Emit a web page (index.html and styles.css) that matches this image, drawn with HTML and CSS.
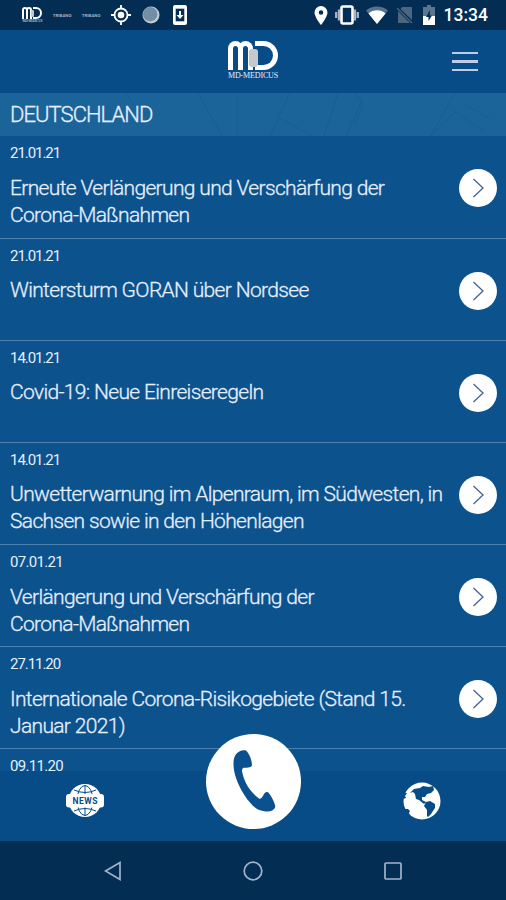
FILE: index.html
```html
<!DOCTYPE html>
<html lang="de">
<head>
  <meta charset="UTF-8">
  <meta name="viewport" content="width=device-width, initial-scale=1.0">
  <title>MD Medicus - Deutschland</title>
  <link rel="stylesheet" href="styles.css">
</head>
<body>
  <div class="phone">
    <div class="statusbar">
      <div class="status-left">
        <div class="logo logo-small">
          <div class="mark"><i class="arch"></i><i class="arch"></i><i class="bow"></i><i class="figure"></i></div>
          <span class="logo-name">MD-MEDICUS</span>
        </div>
        <span class="tiny">TRIBANO</span>
        <span class="tiny">TRIBANO</span>
        <svg class="ico-gps" width="20" height="20" viewBox="0 0 20 20">
          <circle cx="10" cy="10" r="6.5" fill="none" stroke="#fff" stroke-width="1.8"/>
          <circle cx="10" cy="10" r="3.3" fill="#fff"/>
          <path d="M10 0v3M10 17v3M0 10h3M17 10h3" stroke="#fff" stroke-width="1.8"/>
        </svg>
        <svg class="ico-ball" width="18" height="18" viewBox="0 0 18 18">
          <circle cx="9" cy="9" r="8.5" fill="#c3ccd4"/>
          <circle cx="8.2" cy="8.2" r="7.2" fill="#738fa6"/>
        </svg>
        <svg class="ico-down" width="14" height="20" viewBox="0 0 14 20">
          <rect width="14" height="20" rx="2" fill="#fff"/>
          <rect x="2.7" y="3.7" width="8.6" height="12.6" fill="#032d53"/>
          <path d="M6 6h2v4h2.5L7 14 3.5 10H6z" fill="#fff"/>
        </svg>
      </div>
      <div class="status-right">
        <svg width="14" height="19" viewBox="0 0 14 19">
          <path fill-rule="evenodd" d="M7 0a6.5 6.5 0 0 0-6.5 6.5C.5 11 7 19 7 19s6.5-8 6.5-12.5A6.5 6.5 0 0 0 7 0zm0 4.2a2.3 2.3 0 1 1 0 4.6 2.3 2.3 0 0 1 0-4.6z" fill="#fff"/>
        </svg>
        <svg class="ico-vibrate" width="24" height="20" viewBox="0 0 24 20">
          <path d="M1.2 7v6M4 4.5v11M20 4.5v11M22.8 7v6" stroke="#a9b4c0" stroke-width="2.3"/>
          <rect x="6.5" y="1.5" width="11" height="17" rx="1.5" fill="none" stroke="#fff" stroke-width="2.6"/>
        </svg>
        <svg class="ico-wifi" width="22" height="18" viewBox="0 0 22 18">
          <path d="M0 4.500a17 17 0 0 1 22 0L11 18z" fill="#57728a"/>
          <path d="M2.500 7.500a13 13 0 0 1 17 0L11 18z" fill="#fff"/>
        </svg>
        <svg class="ico-sim" width="18" height="18" viewBox="0 0 18 18">
          <path d="M6 1h10v13L4.500 3zM2 5l12 12H2z" fill="#4c667f"/>
          <path d="M1 2l15 15" stroke="#4c667f" stroke-width="1.3"/>
        </svg>
        <svg class="ico-battery" width="12" height="20" viewBox="0 0 12 20">
          <path d="M4 0h4v2h4v9H0V2h4z" fill="#5b758e"/>
          <path d="M0 11h12v9H0z" fill="#fff"/>
          <path d="M7 5L3 12h2.500v4L9 10.500H6.800z" fill="#032d53"/>
        </svg>
        <span class="clock">13:34</span>
      </div>
    </div>

    <header class="header">
      <div class="logo">
        <div class="mark"><i class="arch"></i><i class="arch"></i><i class="bow"></i><i class="figure"></i></div>
        <span class="logo-name">MD-MEDICUS</span>
      </div>
      <div class="burger"><i></i><i></i><i></i></div>
    </header>

    <div class="country">
      <svg class="country-bg" width="506" height="43" viewBox="0 0 506 43" fill="none" stroke="#144f83" stroke-opacity=".35">
        <path d="M125 0l14 18 14 3M198 0l24 43M237 5v38M290 0l-20 43M280 25l32 18M338 0l-14 43M355 0l8 10-8 22M346 43l16-36M455 0l-24 43M430 43l25-24 30 20M465 12l26 14" />
      </svg>
      <h1>DEUTSCHLAND</h1>
    </div>

    <main class="news">
      <article class="item">
        <div class="text"><time>21.01.21</time><h2>Erneute Verlängerung und Verschärfung der<br>Corona-Maßnahmen</h2></div>
        <span class="go"><svg width="38" height="38" viewBox="0 0 38 38"><path d="M14.5 10l9.500 9-9.500 9"/></svg></span>
      </article>
      <article class="item">
        <div class="text"><time>21.01.21</time><h2>Wintersturm GORAN über Nordsee</h2></div>
        <span class="go"><svg width="38" height="38" viewBox="0 0 38 38"><path d="M14.5 10l9.500 9-9.500 9"/></svg></span>
      </article>
      <article class="item">
        <div class="text"><time>14.01.21</time><h2>Covid-19: Neue Einreiseregeln</h2></div>
        <span class="go"><svg width="38" height="38" viewBox="0 0 38 38"><path d="M14.5 10l9.500 9-9.500 9"/></svg></span>
      </article>
      <article class="item">
        <div class="text"><time>14.01.21</time><h2>Unwetterwarnung im Alpenraum, im Südwesten, in<br>Sachsen sowie in den Höhenlagen</h2></div>
        <span class="go"><svg width="38" height="38" viewBox="0 0 38 38"><path d="M14.5 10l9.500 9-9.500 9"/></svg></span>
      </article>
      <article class="item">
        <div class="text"><time class="wide">07.01.21</time><h2>Verlängerung und Verschärfung der<br>Corona-Maßnahmen</h2></div>
        <span class="go"><svg width="38" height="38" viewBox="0 0 38 38"><path d="M14.5 10l9.500 9-9.500 9"/></svg></span>
      </article>
      <article class="item">
        <div class="text"><time>27.11.20</time><h2>Internationale Corona-Risikogebiete (Stand 15.<br>Januar 2021)</h2></div>
        <span class="go"><svg width="38" height="38" viewBox="0 0 38 38"><path d="M14.5 10l9.500 9-9.500 9"/></svg></span>
      </article>
      <article class="item last">
        <div class="text"><time class="wide">09.11.20</time></div>
      </article>
    </main>

    <footer class="tabs">
      <svg class="tab-news" width="38" height="36" viewBox="0 0 38 36">
        <circle cx="19" cy="17.5" r="16.5" fill="#fff"/>
        <g fill="none" stroke="#074b87" stroke-width="1">
          <ellipse cx="19" cy="17.5" rx="8" ry="15"/>
          <path d="M19 2v31M8 7q11 5 22 0M8 28q11-5 22 0"/>
        </g>
        <rect y="11" width="38" height="13.5" rx="3" fill="#fff"/>
        <text x="19" y="20.8" text-anchor="middle" textLength="25" class="news-word">NEWS</text>
      </svg>
      <svg class="tab-world" width="38" height="38" viewBox="0 0 38 38">
        <circle cx="19" cy="19" r="18.5" fill="#fff"/>
        <path fill="#074b87" d="M11 7l6-1 3-2 6 1 4-1 1 4-3 3-4 1-2 3-3 0 0 3 4 2-2 2-5-4-3-1-1-5-2-2-3 1zM23 20l4-1 5 3 0 4-4 6-3 3-1-1 0-6-3-4zM0 11l4 0-2 3 1 2-3 1zM0 24l2 3 3 0 2 2-1 2 2 5-8-5z"/>
      </svg>
      <div class="call">
        <svg width="95" height="95" viewBox="0 0 95 95">
          <path fill="#0b5190" d="M27.500 29C27.500 22 31 17.500 36 16.500c2.500-.5 4-.5 5 1C44 21 46 27 46 31.500c-1 2.500-6 2-9 2.500-1 1-1.200 2.500-.8 4C38 48 44 58 53 64.500c3 1.500 4.500-5 6.500-6s3 0 4 1.500c3 4 5.500 9.500 5.800 13C68 76.500 64 78 60 77.500c-4-.3-8-1.500-11-4C38 64 27 44 27.500 29z"/>
        </svg>
      </div>
    </footer>

    <nav class="android">
      <svg width="18" height="20" viewBox="0 0 18 20"><path d="M1.500 10L16 1.500v17z"/></svg>
      <svg width="20" height="20" viewBox="0 0 20 20"><circle cx="10" cy="10" r="8.800"/></svg>
      <svg width="18" height="18" viewBox="0 0 18 18"><rect x="1" y="1" width="16" height="16" rx="1"/></svg>
    </nav>
  </div>
</body>
</html>
```

FILE: styles.css
```css
* {
  box-sizing: border-box;
}

body {
  margin: 0;
  font-family: Roboto, "Liberation Sans", sans-serif;
  color: #e6effc;
}

svg {
  display: block;
  flex: none;
}

.phone {
  width: 506px;
  height: 900px;
  display: flex;
  flex-direction: column;
  overflow: hidden;
  background: #0c528d;
}

/* status bar */
.statusbar {
  height: 30px;
  flex: none;
  display: flex;
  align-items: center;
  justify-content: space-between;
  padding: 0 18px 0 22px;
  background: #032d53;
}

.status-left,
.status-right {
  display: flex;
  align-items: center;
}

.tiny {
  width: 19px;
  margin-left: 10px;
  font-size: 4.4px;
  font-weight: bold;
  color: #9fb3c6;
}

.ico-gps { margin-left: 10px; }
.ico-ball { margin-left: 11px; }
.ico-down { margin-left: 13px; }
.ico-vibrate { margin-left: 7px; }
.ico-wifi { margin-left: 7px; }
.ico-sim { margin-left: 8px; }
.ico-battery { margin-left: 9px; }

.clock {
  margin-left: 9px;
  font-size: 17.5px;
  font-weight: 500;
  line-height: 30px;
  color: #fff;
}

/* logo */
.logo {
  width: 52px;
  display: flex;
  flex-direction: column;
  align-items: center;
}

.mark {
  position: relative;
  display: flex;
}

.arch {
  width: 15px;
  height: 29px;
  border: 5px solid #fff;
  border-bottom: 0;
  border-radius: 8px 8px 0 0;
}

.arch + .arch {
  margin-left: -5px;
}

.bow {
  width: 23px;
  height: 29px;
  margin-left: 2px;
  border: 5px solid #fff;
  border-left: 0;
  border-radius: 0 15px 15px 0;
}

.figure {
  position: absolute;
  left: 21px;
  top: 8px;
  width: 9px;
  height: 18px;
  border-radius: 3px;
  background: #c5c8cc;
}

.logo-name {
  font: 8px/11px "Liberation Serif", serif;
  letter-spacing: -.15px;
  white-space: nowrap;
}

.logo-small {
  zoom: .4;
}

/* header */
.header {
  height: 63px;
  flex: none;
  display: grid;
  grid-template-columns: 1fr 52px 1fr;
  align-items: center;
  background: #074b87;
}

.header .logo {
  grid-column: 2;
  padding-bottom: 1px;
}

.burger {
  width: 26px;
  margin-right: 28px;
  justify-self: end;
  display: grid;
  gap: 6px;
}

.burger i {
  height: 2.5px;
  background: #bccbe8;
}

.country {
  position: relative;
  height: 43px;
  flex: none;
  padding-left: 10px;
  background: #1b6499;
}

.country-bg {
  position: absolute;
  left: 0;
  top: 0;
}

.country h1 {
  position: relative;
  margin: 0;
  font-size: 22px;
  font-weight: 300;
  line-height: 43px;
  letter-spacing: -.95px;
  -webkit-text-stroke: .3px;
}

/* list */
.news {
  height: 635px;
  flex: none;
}

.item {
  height: 102.2px;
  display: flex;
  justify-content: space-between;
  padding: 8px 9px 0 10px;
  border-bottom: 1px solid #4c80af;
}

.item:first-child {
  height: 102.5px;
}

.item.last {
  height: 22px;
  border: 0;
}

.text {
  white-space: nowrap;
}

time {
  display: block;
  font-size: 15px;
  line-height: 18px;
  letter-spacing: -1.05px;
}

time.wide {
  letter-spacing: -.7px;
}

/* the last date runs a little into the tab bar */
.item.last time {
  position: relative;
  z-index: 1;
}

h2 {
  margin: 12.5px 0 0;
  font-size: 21px;
  font-weight: 300;
  line-height: 27px;
  letter-spacing: -.66px;
  -webkit-text-stroke: .3px;
}

.go {
  width: 38px;
  height: 38px;
  margin-top: 25px;
  border-radius: 50%;
  background: #fff;
}

.go path {
  fill: none;
  stroke: #44629b;
  stroke-width: 1.3;
}

/* bottom tabs */
.tabs {
  position: relative;
  height: 70px;
  flex: none;
  display: flex;
  justify-content: space-between;
  padding: 11px 65px 0 66px;
  background: #074b87;
}

.tab-news {
  margin-top: 1px;
}

.news-word {
  font: bold 8.5px Roboto, sans-serif;
  fill: #074b87;
}

.call {
  position: absolute;
  left: 206px;
  top: -37px;
  width: 95px;
  height: 95px;
  border-radius: 50%;
  background: #fff;
}

.android {
  flex: 1;
  display: flex;
  align-items: center;
  justify-content: space-between;
  padding: 0 104px;
  background: #032d53;
}

.android svg {
  fill: none;
  stroke: #a3b4c9;
  stroke-width: 1.7;
}
```
